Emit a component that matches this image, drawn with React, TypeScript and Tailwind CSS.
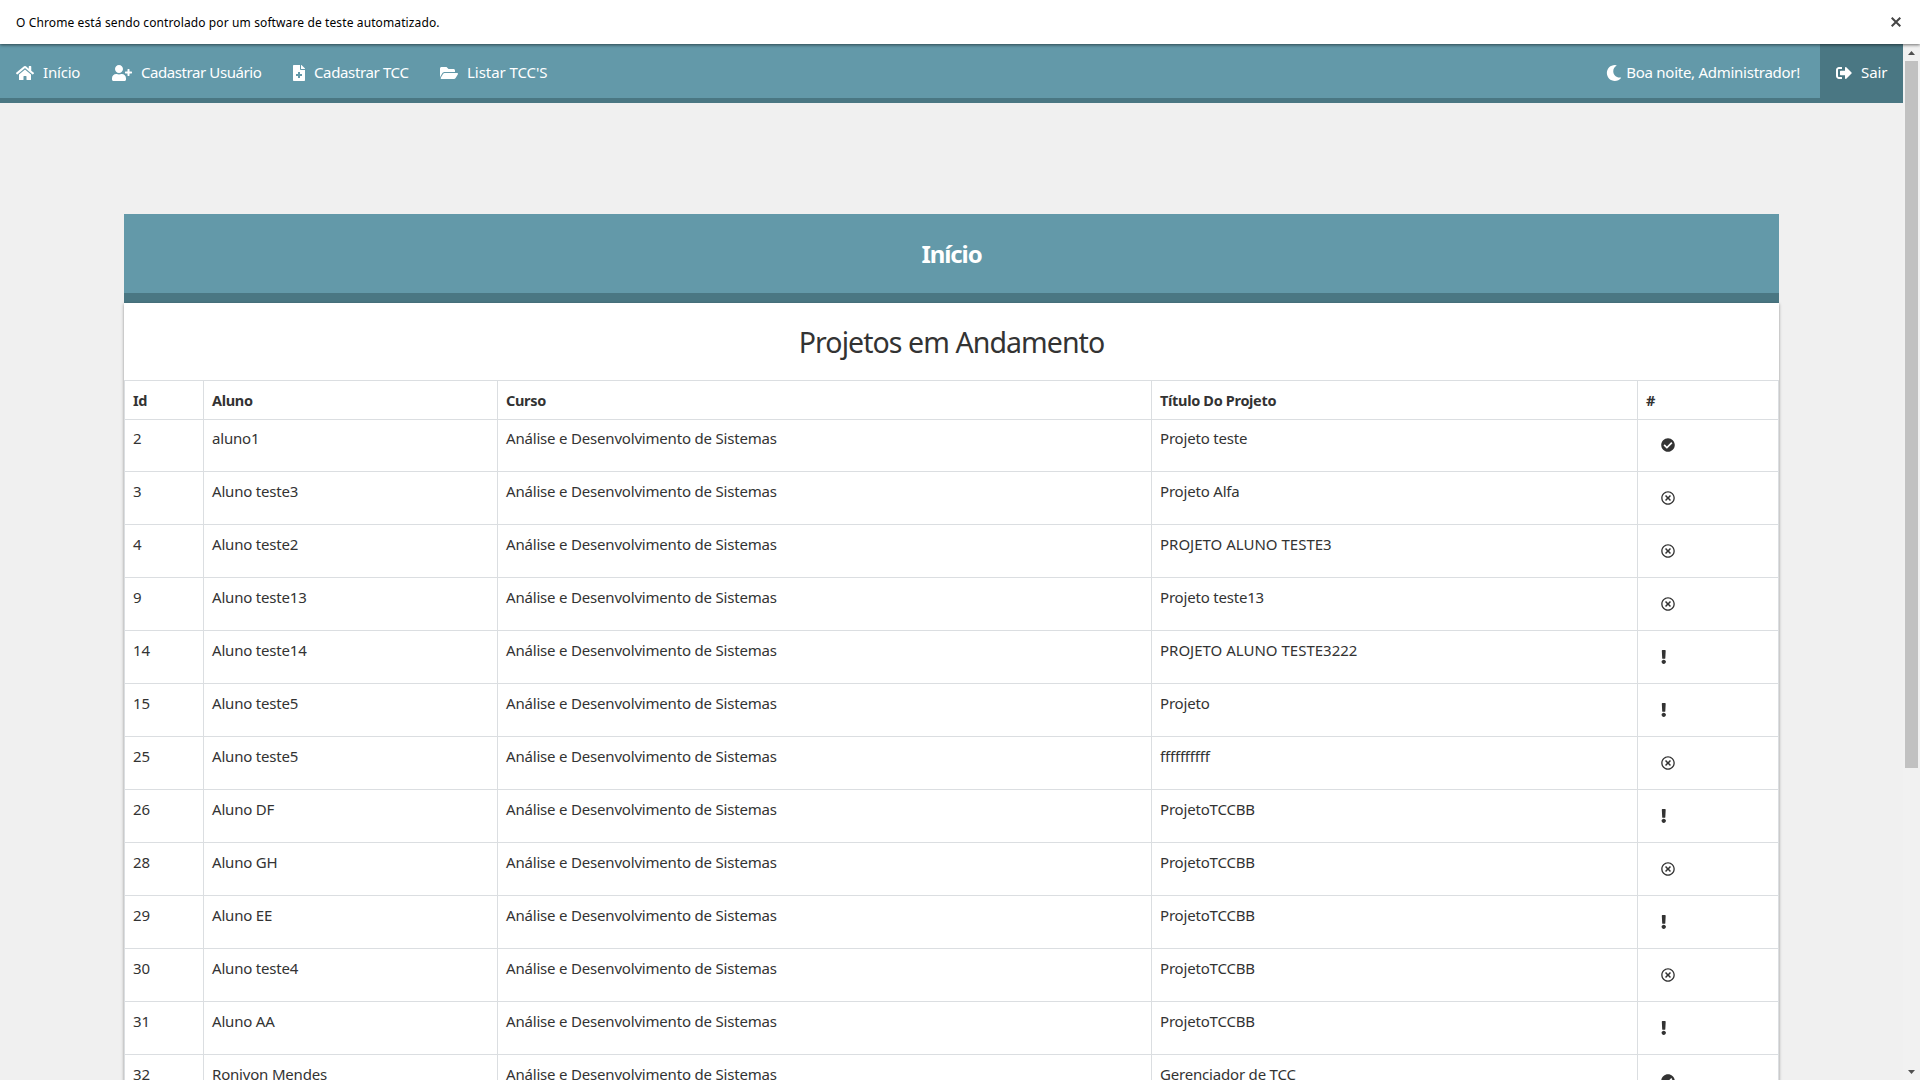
import React from "react";
import {
  FaHome,
  FaUserPlus,
  FaFileMedical,
  FaFolderOpen,
  FaMoon,
  FaSignOutAlt,
  FaCheckCircle,
  FaRegTimesCircle,
  FaExclamation,
} from "react-icons/fa";

type Status = "done" | "rejected" | "pending";

interface Project {
  id: number;
  student: string;
  title: string;
  status: Status;
}

const COURSE = "Análise e Desenvolvimento de Sistemas";

const projects: Project[] = [
  { id: 2, student: "aluno1", title: "Projeto teste", status: "done" },
  { id: 3, student: "Aluno teste3", title: "Projeto Alfa", status: "rejected" },
  { id: 4, student: "Aluno teste2", title: "PROJETO ALUNO TESTE3", status: "rejected" },
  { id: 9, student: "Aluno teste13", title: "Projeto teste13", status: "rejected" },
  { id: 14, student: "Aluno teste14", title: "PROJETO ALUNO TESTE3222", status: "pending" },
  { id: 15, student: "Aluno teste5", title: "Projeto", status: "pending" },
  { id: 25, student: "Aluno teste5", title: "ffffffffff", status: "rejected" },
  { id: 26, student: "Aluno DF", title: "ProjetoTCCBB", status: "pending" },
  { id: 28, student: "Aluno GH", title: "ProjetoTCCBB", status: "rejected" },
  { id: 29, student: "Aluno EE", title: "ProjetoTCCBB", status: "pending" },
  { id: 30, student: "Aluno teste4", title: "ProjetoTCCBB", status: "rejected" },
  { id: 31, student: "Aluno AA", title: "ProjetoTCCBB", status: "pending" },
  { id: 32, student: "Ronivon Mendes", title: "Gerenciador de TCC", status: "done" },
];

function StatusIcon({ status }: { status: Status }) {
  if (status === "done") return <FaCheckCircle className="size-3.5" />;
  if (status === "rejected") return <FaRegTimesCircle className="size-3.5" />;
  return <FaExclamation className="h-3.5 w-[5.5px]" />;
}

function InfoBar() {
  return (
    <div className="relative z-10 flex h-11 shrink-0 items-center justify-between bg-white pr-[19px] pl-4 text-xs text-black shadow-[0_1px_3px_rgba(0,0,0,0.55)]">
      <span className="pt-0.5 tracking-[0.115px]">O Chrome está sendo controlado por um software de teste automatizado.</span>
      <svg viewBox="0 0 10 10" className="size-[10px] stroke-[#454545]" strokeWidth="2" fill="none">
        <path d="M0.7 0.7L9.3 9.3M9.3 0.7L0.7 9.3" />
      </svg>
    </div>
  );
}

function NavBar() {
  return (
    <nav className="flex h-[59px] shrink-0 border-b-[5px] border-[#4a7783] bg-[#6399a9] text-[15px] text-white">
      <a className="flex w-24 items-center pt-[3px] pl-4">
        <FaHome className="h-4 w-[18px]" />
        <span className="ml-[9px] tracking-[-0.2px]">Início</span>
      </a>
      <a className="flex w-[181px] items-center pt-[3px] pl-4">
        <FaUserPlus className="h-4 w-5" />
        <span className="ml-[9px] tracking-[-0.42px]">Cadastrar Usuário</span>
      </a>
      <a className="flex w-[147px] items-center pt-[3px] pl-4">
        <FaFileMedical className="h-4 w-3" />
        <span className="ml-[9px] tracking-[-0.36px]">Cadastrar TCC</span>
      </a>
      <a className="flex items-center pt-[3px] pl-4">
        <FaFolderOpen className="h-4 w-[18px]" />
        <span className="ml-[9px] tracking-[-0.05px]">Listar TCC'S</span>
      </a>
      <div className="ml-auto flex items-center pt-[3px] pr-5">
        <FaMoon className="size-4" />
        <span className="ml-1 tracking-[-0.27px]">Boa noite, Administrador!</span>
      </div>
      <a className="-mb-[5px] flex w-[83px] items-center bg-[#4a7783] pt-[3px] pb-[5px] pl-4">
        <FaSignOutAlt className="size-4" />
        <span className="ml-[9px] tracking-[-0.1px]">Sair</span>
      </a>
    </nav>
  );
}

function ScrollBar() {
  return (
    <div className="flex w-[17px] shrink-0 flex-col items-center justify-between bg-[#f1f1f1]">
      <svg viewBox="0 0 17 17" className="size-[17px] fill-[#505050]">
        <path d="M5 11L8.5 7L12 11Z" />
      </svg>
      <div className="h-[707px] w-[13px] bg-[#c1c1c1]" />
      <div className="grow" />
      <svg viewBox="0 0 17 17" className="size-[17px] fill-[#505050]">
        <path d="M5 7L8.5 11L12 7Z" />
      </svg>
    </div>
  );
}

function ProjectTable() {
  const line = "border-[#dbdee1]";
  const columns = "grid grid-cols-[79px_294px_654px_486px_1fr]";
  const cell = `border-l ${line} pl-2`;
  return (
    <div className={`border-r ${line} text-[15px] tracking-[-0.19px]`}>
      <div className={`${columns} h-[39px] border-t ${line} text-[14.5px] font-bold tracking-[-0.32px]`}>
        {["Id", "Aluno", "Curso", "Título Do Projeto", "#"].map((h) => (
          <div key={h} className={`${cell} pt-[7px] leading-6`}>
            {h}
          </div>
        ))}
      </div>
      {projects.map((p, i) => {
        const text = `${cell} ${i === 0 ? "pt-1.5" : "pt-[7px]"}`;
        return (
          <div key={p.id} className={`${columns} border-t ${line} leading-6 ${i === 0 ? "h-[52px]" : "h-[53px]"}`}>
            <div className={text}>{p.id}</div>
            <div className={text}>{p.student}</div>
            <div className={text}>{COURSE}</div>
            <div className={`${text} ${p.title === p.title.toUpperCase() ? "tracking-normal" : ""}`}>{p.title}</div>
            <div className={`border-l ${line} pl-[23px] ${i === 0 ? "pt-[18px]" : "pt-[19px]"}`}>
              <StatusIcon status={p.status} />
            </div>
          </div>
        );
      })}
    </div>
  );
}

export default function App() {
  return (
    <div className="flex h-[1080px] w-[1920px] flex-col overflow-hidden bg-[#f0f0f0] font-['Noto_Sans',sans-serif] text-[#333]">
      <InfoBar />
      <div className="flex min-h-0 grow">
        <div className="flex min-w-0 grow flex-col">
          <NavBar />
          <main className="min-h-0 grow overflow-hidden px-[124px] pt-[111px]">
            <header className="flex h-[89px] items-center justify-center border-b-[10px] border-[#4a7783] bg-[#6399a9]">
              <h1 className="text-2xl font-bold tracking-[-1.1px] text-white">Início</h1>
            </header>
            <section className="bg-white shadow-[0_1px_3px_rgba(0,0,0,0.4)]">
              <h2 className="flex h-[77px] items-center justify-center pt-0.5 text-[28.5px] tracking-[-0.93px]">
                Projetos em Andamento
              </h2>
              <ProjectTable />
            </section>
          </main>
        </div>
        <ScrollBar />
      </div>
    </div>
  );
}
